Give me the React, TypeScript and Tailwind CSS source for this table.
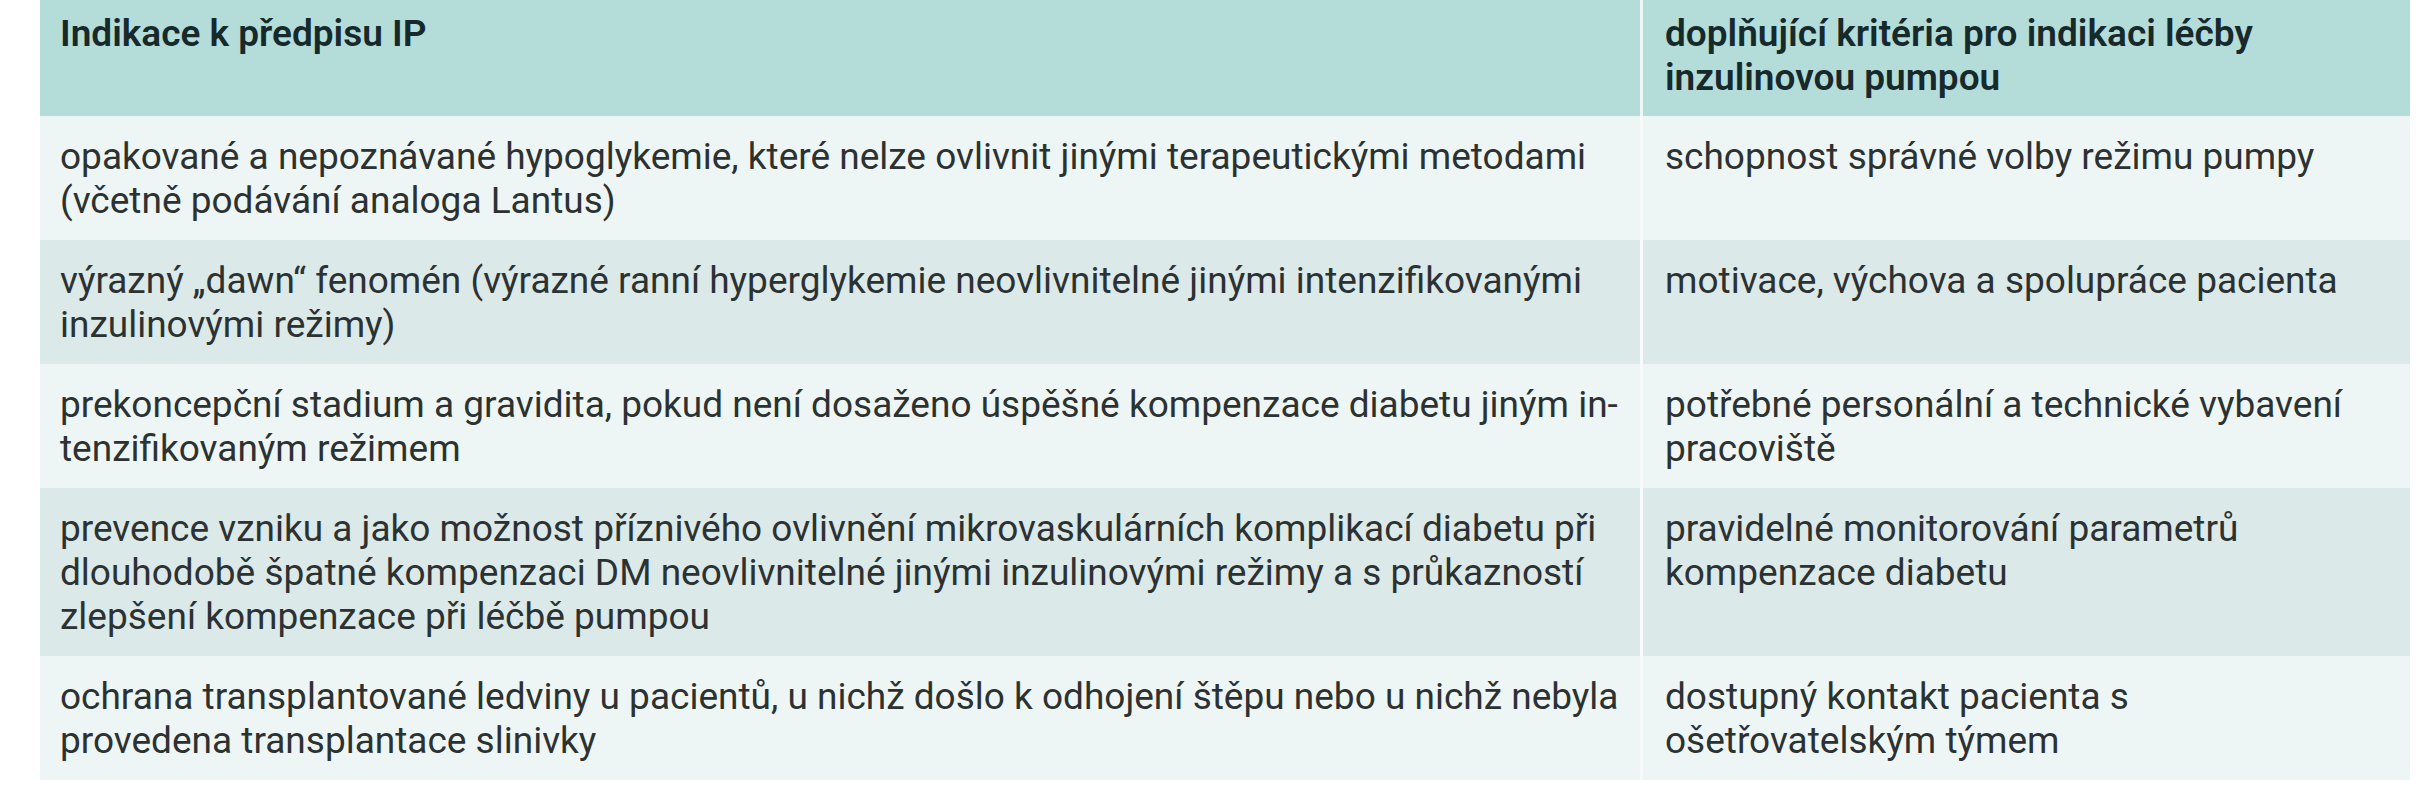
import React from 'react';

type Row = {
  left: string[];
  right: string[];
};

const rows: Row[] = [
  {
    left: [
      'opakované a nepoznávané hypoglykemie, které nelze ovlivnit jinými terapeutickými metodami',
      '(včetně podávání analoga Lantus)',
    ],
    right: ['schopnost správné volby režimu pumpy'],
  },
  {
    left: [
      'výrazný „dawn“ fenomén (výrazné ranní hyperglykemie neovlivnitelné jinými intenzifikovanými',
      'inzulinovými režimy)',
    ],
    right: ['motivace, výchova a spolupráce pacienta'],
  },
  {
    left: [
      'prekoncepční stadium a gravidita, pokud není dosaženo úspěšné kompenzace diabetu jiným in-',
      'tenzifikovaným režimem',
    ],
    right: ['potřebné personální a technické vybavení', 'pracoviště'],
  },
  {
    left: [
      'prevence vzniku a jako možnost příznivého ovlivnění mikrovaskulárních komplikací diabetu při',
      'dlouhodobě špatné kompenzaci DM neovlivnitelné jinými inzulinovými režimy a s průkazností',
      'zlepšení kompenzace při léčbě pumpou',
    ],
    right: ['pravidelné monitorování parametrů', 'kompenzace diabetu'],
  },
  {
    left: [
      'ochrana transplantované ledviny u pacientů, u nichž došlo k odhojení štěpu nebo u nichž nebyla',
      'provedena transplantace slinivky',
    ],
    right: ['dostupný kontakt pacienta s', 'ošetřovatelským týmem'],
  },
];

const Lines = ({ lines }: { lines: string[] }) => (
  <>
    {lines.map((l, i) => (
      <div key={i} className="whitespace-nowrap">
        {l}
      </div>
    ))}
  </>
);

export default function App() {
  return (
    <div className="w-[2436px] h-[800px] bg-white pl-[40px] font-['Roboto',sans-serif]">
      <div className="w-[2370px] flex flex-col text-[37px] leading-[44px] text-[#2c3132]">
        {/* header */}
        <div className="flex bg-[#b4dcd9] h-[116px]">
          <div className="w-[1600px] pl-[20px] pt-[12px] font-semibold text-[#16292b]">
            Indikace k předpisu IP
          </div>
          <div className="w-[3px] bg-[#eef6f6]" />
          <div className="flex-1 pl-[22px] pt-[12px] font-semibold text-[#16292b]">
            <Lines lines={['doplňující kritéria pro indikaci léčby', 'inzulinovou pumpou']} />
          </div>
        </div>

        {rows.map((r, i) => (
          <div
            key={i}
            className={`flex ${i % 2 === 0 ? 'bg-[#eef6f5]' : 'bg-[#dbe9e9]'}`}
          >
            <div className="w-[1600px] pl-[20px] pt-[19px] pb-[17px]">
              <Lines lines={r.left} />
            </div>
            <div className="w-[3px] bg-[#f6fafa]" />
            <div className="flex-1 pl-[22px] pt-[19px] pb-[17px]">
              <Lines lines={r.right} />
            </div>
          </div>
        ))}
      </div>
    </div>
  );
}
